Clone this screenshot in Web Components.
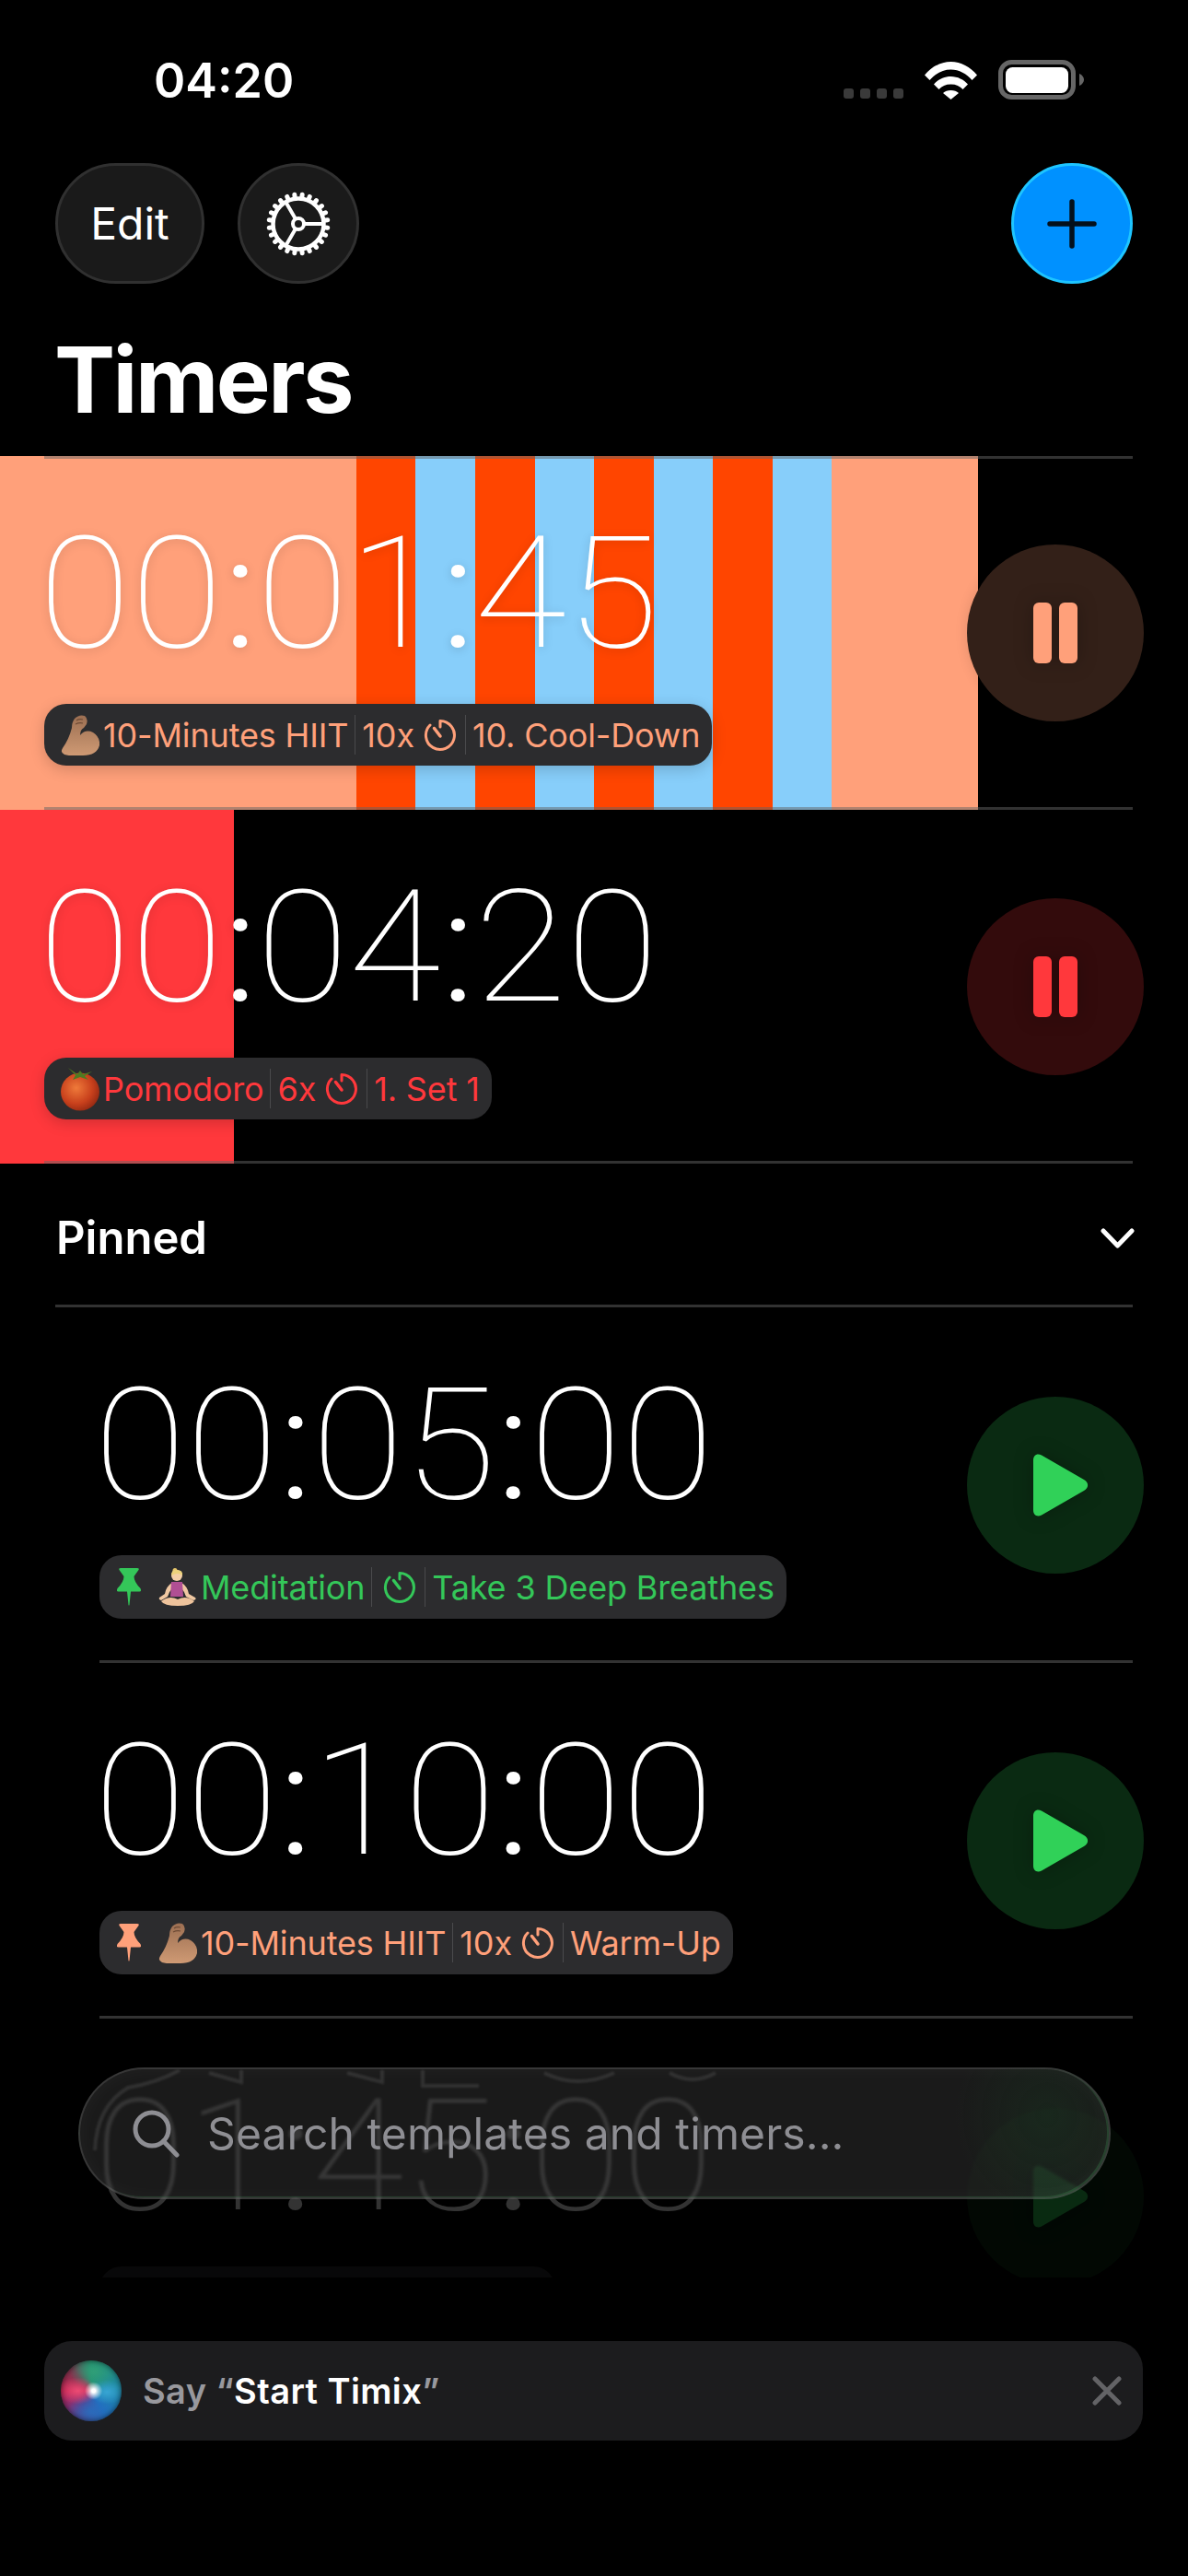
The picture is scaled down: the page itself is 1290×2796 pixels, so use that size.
<!DOCTYPE html>
<html lang="en">
<head>
<meta charset="utf-8">
<title>Timers</title>
<style>
  html, body { margin: 0; background: #000; }
  body { width: 1290px; height: 2796px; overflow: hidden; font-family: Inter, "Liberation Sans", sans-serif; color: #fff; }
</style>
</head>
<body>
<timer-app>
  <status-bar time="04:20"></status-bar>
  <top-bar>
    <round-button tone="wide">Edit</round-button>
    <round-button tone="icon"><gear-glyph></gear-glyph></round-button>
    <round-button slot="end" tone="blue"><plus-glyph></plus-glyph></round-button>
  </top-bar>
  <page-title>Timers</page-title>
  <timer-list>
    <timer-row time="00:01:45" state="running" top-line accent="#ffa07a"
      fill="linear-gradient(90deg,#ffa07a 0 387px,#ff4500 387px 451px,#87cefa 451px 516px,#ff4500 516px 581px,#87cefa 581px 645px,#ff4500 645px 710px,#87cefa 710px 774px,#ff4500 774px 839px,#87cefa 839px 903px,#ffa07a 903px 1062px,transparent 1062px)">
      <emoji-glyph kind="biceps"></emoji-glyph><span>10-Minutes HIIT</span><pill-sep></pill-sep><span>10x</span><timer-glyph></timer-glyph><pill-sep></pill-sep><span>10. Cool-Down</span>
    </timer-row>
    <timer-row time="00:04:20" state="running" accent="#ff383c"
      fill="linear-gradient(90deg,#ff383c 0 254px,transparent 254px)">
      <emoji-glyph kind="tomato"></emoji-glyph><span>Pomodoro</span><pill-sep></pill-sep><span>6x</span><timer-glyph></timer-glyph><pill-sep></pill-sep><span>1. Set 1</span>
    </timer-row>
    <section-header>Pinned</section-header>
    <timer-row time="00:05:00" pinned accent="#34c759">
      <pin-glyph></pin-glyph><emoji-glyph kind="yoga"></emoji-glyph><span>Meditation</span><pill-sep></pill-sep><timer-glyph></timer-glyph><pill-sep></pill-sep><span>Take 3 Deep Breathes</span>
    </timer-row>
    <timer-row time="00:10:00" pinned accent="#ffa07a">
      <pin-glyph></pin-glyph><emoji-glyph kind="biceps"></emoji-glyph><span>10-Minutes HIIT</span><pill-sep></pill-sep><span>10x</span><timer-glyph></timer-glyph><pill-sep></pill-sep><span>Warm-Up</span>
    </timer-row>
    <timer-row time="01:45:00" pinned faded accent="#34c759">
      <span style="width:464px"></span>
    </timer-row>
    <search-bar slot="over">Search templates and timers...</search-bar>
  </timer-list>
  <siri-tip>Say “<b>Start Timix</b>”</siri-tip>
</timer-app>

<script>
class BaseElement extends HTMLElement {
  connectedCallback() {
    if (!this.shadowRoot) {
      this.attachShadow({ mode: "open" });
      this.shadowRoot.innerHTML = `<style>${this.constructor.styles}</style>${this.markup()}`;
    }
  }
  markup() { return "<slot></slot>"; }
}

class TimerApp extends BaseElement {
  static styles = /* css */`
    :host { display: flex; flex-direction: column; width: 1290px; height: 2796px; background: #000; }
  `;
}

class StatusBar extends BaseElement {
  static styles = /* css */`
    :host { display: flex; align-items: flex-start; justify-content: space-between; height: 177px; box-sizing: border-box; padding: 0 113px 0 167px; }
    .time { font-size: 52px; font-weight: 600; line-height: 64px; margin-top: 56px; }
    .right { display: flex; align-items: flex-end; gap: 23px; margin-top: 65px; height: 43px; }
    .dots { display: flex; gap: 7px; padding-bottom: 1px; }
    .dots i { width: 11px; height: 11px; border-radius: 3px; background: #3a3a3a; }
    svg { display: block; }
  `;
  markup() {
    return /* html */`
      <div class="time">${this.getAttribute("time")}</div>
      <div class="right">
        <div class="dots"><i></i><i></i><i></i><i></i></div>
        <svg width="57" height="41" viewBox="0 0 57 41" fill="#fff">
          <path d="M0 14.500C7.500 5.500 17.500 0 28.500 0S49.500 5.500 57 14.500L51.500 20C45.500 13 37.500 8.500 28.500 8.500S11.500 13 5.500 20Z"/>
          <path d="M10 24.500C14.500 19.500 21 16 28.500 16S42.500 19.500 47 24.500L41.500 30C38.500 26.500 34 24.500 28.500 24.500S18.500 26.500 15.500 30Z"/>
          <path d="M20 34C22 32 25 31 28.500 31S35 32 37 34L28.500 41Z"/>
        </svg>
        <svg width="94" height="43" viewBox="0 0 94 43" style="margin-right:-1px">
          <rect x="2.500" y="2.500" width="79" height="38" rx="12" fill="none" stroke="#666" stroke-width="5"/>
          <rect x="8" y="8" width="68" height="28" rx="7.500" fill="#fff"/>
          <path d="M88 15C91 16 93 19 93 21.500S91 27 88 28Z" fill="#666"/>
        </svg>
      </div>`;
  }
}

class TopBar extends BaseElement {
  static styles = /* css */`
    :host { display: flex; height: 131px; padding: 0 60px; gap: 36px; }
    .end { margin-left: auto; display: flex; }
  `;
  markup() { return `<slot></slot><div class="end"><slot name="end"></slot></div>`; }
}

class RoundButton extends BaseElement {
  static styles = /* css */`
    :host { display: flex; align-items: center; justify-content: center; width: 132px; height: 131px; box-sizing: border-box; border-radius: 66px; background: #1a1a1a; border: 3px solid #303030; font-size: 48px; line-height: 1; color: #fff; }
    :host([tone="wide"]) { width: 162px; }
    :host([tone="blue"]) { background: #0091ff; border-color: #1ec5ff; }
  `;
}

class GearGlyph extends BaseElement {
  static styles = /* css */`
    :host { display: block; width: 72px; height: 72px; }
    svg { display: block; }
  `;
  markup() {
    let teeth = "";
    for (let i = 0; i < 24; i++) {
      const a = (i + 0.5) * Math.PI / 12;
      const x1 = 36 + 28 * Math.cos(a), y1 = 36 + 28 * Math.sin(a);
      const x2 = 36 + 32 * Math.cos(a), y2 = 36 + 32 * Math.sin(a);
      teeth += `M${x1.toFixed(2)} ${y1.toFixed(2)}L${x2.toFixed(2)} ${y2.toFixed(2)}`;
    }
    return /* html */`
      <svg width="72" height="72" viewBox="0 0 72 72" fill="none" stroke="#fff">
        <path d="${teeth}" stroke-width="5" stroke-linecap="round"/>
        <circle cx="36" cy="36" r="27.500" stroke-width="4.500"/>
        <circle cx="36" cy="36" r="6" stroke-width="4"/>
        <path d="M42 36H63M33 30.800 22.250 12.200M33 41.200 22.250 59.800" stroke-width="4"/>
      </svg>`;
  }
}

class PlusGlyph extends BaseElement {
  static styles = /* css */`
    :host { display: block; width: 54px; height: 54px; }
    svg { display: block; }
  `;
  markup() {
    return `<svg width="54" height="54" viewBox="0 0 54 54"><path d="M27 3V51M3 27H51" stroke="#04101c" stroke-width="5.500" stroke-linecap="round"/></svg>`;
  }
}

class PageTitle extends BaseElement {
  static styles = /* css */`
    :host { display: block; height: 187px; box-sizing: border-box; padding: 44px 0 0 59px; font-size: 99px; font-weight: 700; line-height: 120px; letter-spacing: -2.500px; }
  `;
}

class TimerList extends BaseElement {
  static styles = /* css */`
    :host { display: block; position: relative; height: 1977px; }
    .clip { height: 100%; overflow: hidden; }
  `;
  markup() { return `<div class="clip"><slot></slot></div><slot name="over"></slot>`; }
}

class TimerRow extends BaseElement {
  static styles = /* css */`
    :host { display: block; position: relative; height: 384px; box-sizing: border-box; padding-left: 48px; --line: rgba(100, 100, 100, .5); --pill-h: 67px; --action-top: 96px; }
    :host([pinned]) { height: 386px; padding-left: 108px; --pill-h: 69px; --action-top: 97px; }
    :host::after, :host([top-line])::before { content: ""; position: absolute; left: 48px; right: 60px; height: 3px; background: var(--line); }
    :host::after { bottom: 0; }
    :host::before { top: 0; }
    :host([pinned])::after { left: 108px; }
    :host([faded])::after { display: none; }
    :host([faded]) .body { opacity: .2; }
    .body { display: flex; justify-content: space-between; height: 100%; padding-right: 48px; color: var(--accent); }
    .left { padding-top: 59px; }
    /* the display digits of the original are wider than Roboto's */
    .clock { font-family: Roboto, "Liberation Sans", sans-serif; font-size: 169px; font-weight: 250; line-height: 180px; color: #fff; height: 210px; margin-left: -6px; font-feature-settings: "tnum"; white-space: nowrap; text-shadow: 0 2px 10px rgba(0,0,0,.15); transform: scaleX(1.08); transform-origin: left center; }
    .clock b { display: inline-block; box-sizing: border-box; font-weight: 300; width: 34px; text-align: center; }
    .action { width: 192px; height: 192px; margin-top: var(--action-top); border-radius: 50%; display: flex; align-items: center; justify-content: center; background: color-mix(in srgb, var(--action) 20%, #000); box-shadow: 0 0 14px rgba(0,0,0,.12); flex: none; }
    .action svg { filter: drop-shadow(0 0 10px rgba(0,0,0,.25)); }
  `;
  markup() {
    const [h, m, s] = this.getAttribute("time").split(":");
    const running = this.getAttribute("state") === "running";
    const accent = this.getAttribute("accent");
    const fill = this.getAttribute("fill");
    this.style.setProperty("--accent", accent);
    this.style.setProperty("--action", running ? accent : "#30d158");
    if (fill) this.style.background = fill;
    const icon = running
      ? `<svg width="48" height="66" viewBox="0 0 48 66" fill="${accent}"><rect width="20" height="66" rx="6"/><rect x="28" width="20" height="66" rx="6"/></svg>`
      : `<svg width="60" height="68" viewBox="0 0 60 68" style="margin-left:11px"><path d="M0 7C0 1.500 4 -1 9 1.500L55 28C60.500 31 60.500 37 55 40L9 66.500C4 69 0 66.500 0 61Z" fill="#30d158"/></svg>`;
    return /* html */`
      <div class="body">
        <div class="left">
          <div class="clock"><span>${h}</span><b>:</b><span>${m}</span><b>:</b><span>${s}</span></div>
          <timer-pill><slot></slot></timer-pill>
        </div>
        <div class="action">${icon}</div>
      </div>`;
  }
}

class TimerPill extends BaseElement {
  static styles = /* css */`
    :host { display: inline-flex; align-items: center; height: var(--pill-h); box-sizing: border-box; padding: 0 13px 0 18px; gap: 5px; border-radius: 24px; background: #2c2c2e; font-size: 36px; line-height: 1; letter-spacing: -.15px; white-space: nowrap; box-shadow: 0 4px 16px rgba(0,0,0,.18); }
    ::slotted(span) { display: block; }
  `;
}

class PillSep extends BaseElement {
  static styles = /* css */`
    :host { display: block; width: 1px; height: 43px; background: #4a4a4c; margin: 0 2px; }
  `;
  markup() { return ""; }
}

class TimerGlyph extends BaseElement {
  static styles = /* css */`
    :host { display: block; width: 36px; height: 36px; margin: 0 2px 0 5px; }
    svg { display: block; }
  `;
  markup() {
    return /* html */`
      <svg width="36" height="36" viewBox="0 0 36 36" fill="none" stroke="currentColor" stroke-width="3" stroke-linecap="round">
        <path d="M18 2.500V9M18 2.500A15.500 15.500 0 1 1 7 7"/>
        <path d="M11.500 10.500 18 19" stroke-width="3.500"/>
      </svg>`;
  }
}

class PinGlyph extends BaseElement {
  static styles = /* css */`
    :host { display: block; width: 28px; height: 41px; margin: 0 13px 0 0; }
    svg { display: block; }
  `;
  markup() {
    return `<svg width="28" height="41" viewBox="0 0 28 41" fill="currentColor"><path d="M5 0H23Q25.500 0 24.500 2L19.500 9Q19.500 15 26.500 22Q28 25.500 25.500 25.500H16L14.500 40Q14 41 13.500 40L12 25.500H2.500Q0 25.500 1.500 22Q8.500 15 8.500 9L3.500 2Q2.500 0 5 0Z"/></svg>`;
  }
}

// emoji are drawn because no emoji font can be relied on
const EMOJI = {
  biceps: `<svg width="42" height="44" viewBox="0 0 42 44">
    <defs><linearGradient id="a" x1="0" y1="0" x2="0" y2="1"><stop offset="0" stop-color="#9c6f52"/><stop offset="1" stop-color="#cf9a74"/></linearGradient></defs>
    <path d="M15 4Q20-1 26 1Q30 4 28 10L25 14Q21 16 21 22Q27 15 35 19Q43 24 42 33Q39 44 24 44Q10 45 4 43Q-1 41 2 36Q9 26 12 14Q12 8 15 4Z" fill="url(#a)"/>
    <path d="M17 6Q20 4 24 5M16 10Q20 8 24 9" stroke="#6e4b35" stroke-width="1.200" fill="none"/>
  </svg>`,
  tomato: `<svg width="42" height="48" viewBox="0 0 42 48">
    <defs><radialGradient id="t" cx=".4" cy=".4" r=".7"><stop offset="0" stop-color="#ef7a3a"/><stop offset=".6" stop-color="#c8401c"/><stop offset="1" stop-color="#8a2410"/></radialGradient></defs>
    <ellipse cx="21" cy="27" rx="21" ry="20.500" fill="url(#t)"/>
    <path d="M8 1 18 8 21 4 24 8 34 5 26 10 30 14 21 11 13 14 16 9Z" fill="#4e7a22"/>
  </svg>`,
  yoga: `<svg width="42" height="42" viewBox="0 0 42 42">
    <circle cx="18" cy="2.500" r="2.500" fill="#e6c56a"/>
    <circle cx="20" cy="8" r="6" fill="#f4cfa8"/>
    <path d="M14 8Q14 1 20 2Q27 2 26 8Q22 4 14 8Z" fill="#ecd27c"/>
    <path d="M16 15Q8 20 7 28L1 32Q0 34 3 35L10 31Q12 25 15 22ZM24 15Q32 20 33 28L40 32Q42 34 38 35L30 31Q28 25 25 22Z" fill="#f0c8a2"/>
    <path d="M14 15H26L27 31H13Z" fill="#b04f94"/>
    <path d="M3 36Q12 29 21 34Q30 29 39 36Q36 41 21 41Q6 41 3 36Z" fill="#eec39c"/>
  </svg>`
};

class EmojiGlyph extends BaseElement {
  static styles = /* css */`
    :host { display: block; line-height: 0; flex: none; margin-right: -1px; }
    svg { display: block; }
  `;
  markup() { return EMOJI[this.getAttribute("kind")]; }
}

class SectionHeader extends BaseElement {
  static styles = /* css */`
    :host { display: flex; align-items: flex-start; justify-content: space-between; position: relative; height: 156px; box-sizing: border-box; padding: 52px 58px 0 61px; font-size: 49px; font-weight: 600; line-height: 58px; }
    :host::after { content: ""; position: absolute; left: 60px; right: 60px; bottom: 0; height: 3px; background: #323232; }
    svg { display: block; margin-top: 18px; }
  `;
  markup() {
    return `<slot></slot><svg width="37" height="22" viewBox="0 0 37 22" fill="none" stroke="#fff" stroke-width="5" stroke-linecap="round" stroke-linejoin="round"><path d="M3 3 18.500 19 34 3"/></svg>`;
  }
}

class SearchBar extends BaseElement {
  static styles = /* css */`
    :host { display: flex; align-items: center; gap: 29px; position: absolute; left: 85px; right: 84px; bottom: 85px; height: 143px; box-sizing: border-box; padding: 0 0 0 57px; border-radius: 72px; overflow: hidden; background: radial-gradient(ellipse 100px 110px at 1050px 50px, rgba(20, 80, 36, .2), transparent), rgba(60, 60, 60, .43); border: 2px solid rgba(255, 255, 255, .13); box-shadow: inset 0 0 22px rgba(255, 255, 255, .04), inset -2px -1px 0 rgba(60, 140, 80, .3); backdrop-filter: blur(1.500px); font-size: 48px; letter-spacing: .1px; color: #8e8e93; }
    svg.glass { display: block; flex: none; }
    svg.refract { position: absolute; left: 0; top: 0; filter: blur(.8px); }
  `;
  markup() {
    return /* html */`
      <svg class="refract" width="1121" height="143" viewBox="0 0 1121 143" fill="none" stroke="rgba(255,255,255,.1)" stroke-width="4">
        <path d="M16 88Q18 40 52 20Q85 14 108 1M140 4 175 14V1M290 4 328 14V1M372 1V18H433M504 4Q540 22 580 4M640 4Q665 18 690 4"/>
      </svg>
      <svg class="glass" width="52" height="52" viewBox="0 0 52 52" fill="none" stroke="#8e8e93" stroke-width="5" stroke-linecap="round"><circle cx="21" cy="21" r="18"/><path d="M33.500 34 48 49"/></svg>
      <slot></slot>`;
  }
}

class SiriTip extends BaseElement {
  static styles = /* css */`
    :host { display: flex; align-items: center; height: 108px; margin: 69px 49px 0 48px; box-sizing: border-box; padding: 0 23px 0 18px; border-radius: 30px; background: #1c1c1e; font-size: 38px; font-weight: 600; letter-spacing: .4px; color: #98989d; }
    .orb { width: 66px; height: 66px; border-radius: 50%; margin-right: 23px; flex: none;
      background:
        radial-gradient(circle at 54% 50%, #fff 0 4%, rgba(255,255,255,.65) 9%, transparent 20%),
        radial-gradient(ellipse 34% 22% at 28% 50%, rgba(240,80,120,.9), transparent),
        radial-gradient(ellipse 28% 20% at 76% 52%, rgba(60,170,220,.85), transparent),
        radial-gradient(ellipse 40% 30% at 55% 18%, rgba(50,160,120,.9), transparent),
        radial-gradient(ellipse 40% 26% at 50% 84%, rgba(40,110,190,.85), transparent),
        conic-gradient(from 0deg, #1f8f70, #1f8aa8 90deg, #1f6fc0 150deg, #5a3f8f 210deg, #c02050 270deg, #7a3a50 320deg, #1f8f70);
      box-shadow: inset 0 0 6px rgba(0,0,0,.6); }
    .text { flex: 1; }
    ::slotted(b) { color: #fff; font-weight: 600; }
    svg { display: block; }
  `;
  markup() {
    return /* html */`
      <div class="orb"></div>
      <div class="text"><slot></slot></div>
      <svg width="32" height="32" viewBox="0 0 32 32" stroke="#636366" stroke-width="5" stroke-linecap="round"><path d="M3 3 29 29M29 3 3 29"/></svg>`;
  }
}

customElements.define("status-bar", StatusBar);
customElements.define("top-bar", TopBar);
customElements.define("round-button", RoundButton);
customElements.define("gear-glyph", GearGlyph);
customElements.define("plus-glyph", PlusGlyph);
customElements.define("page-title", PageTitle);
customElements.define("timer-list", TimerList);
customElements.define("timer-row", TimerRow);
customElements.define("timer-pill", TimerPill);
customElements.define("pill-sep", PillSep);
customElements.define("timer-glyph", TimerGlyph);
customElements.define("pin-glyph", PinGlyph);
customElements.define("emoji-glyph", EmojiGlyph);
customElements.define("section-header", SectionHeader);
customElements.define("search-bar", SearchBar);
customElements.define("siri-tip", SiriTip);
customElements.define("timer-app", TimerApp);
</script>
</body>
</html>
